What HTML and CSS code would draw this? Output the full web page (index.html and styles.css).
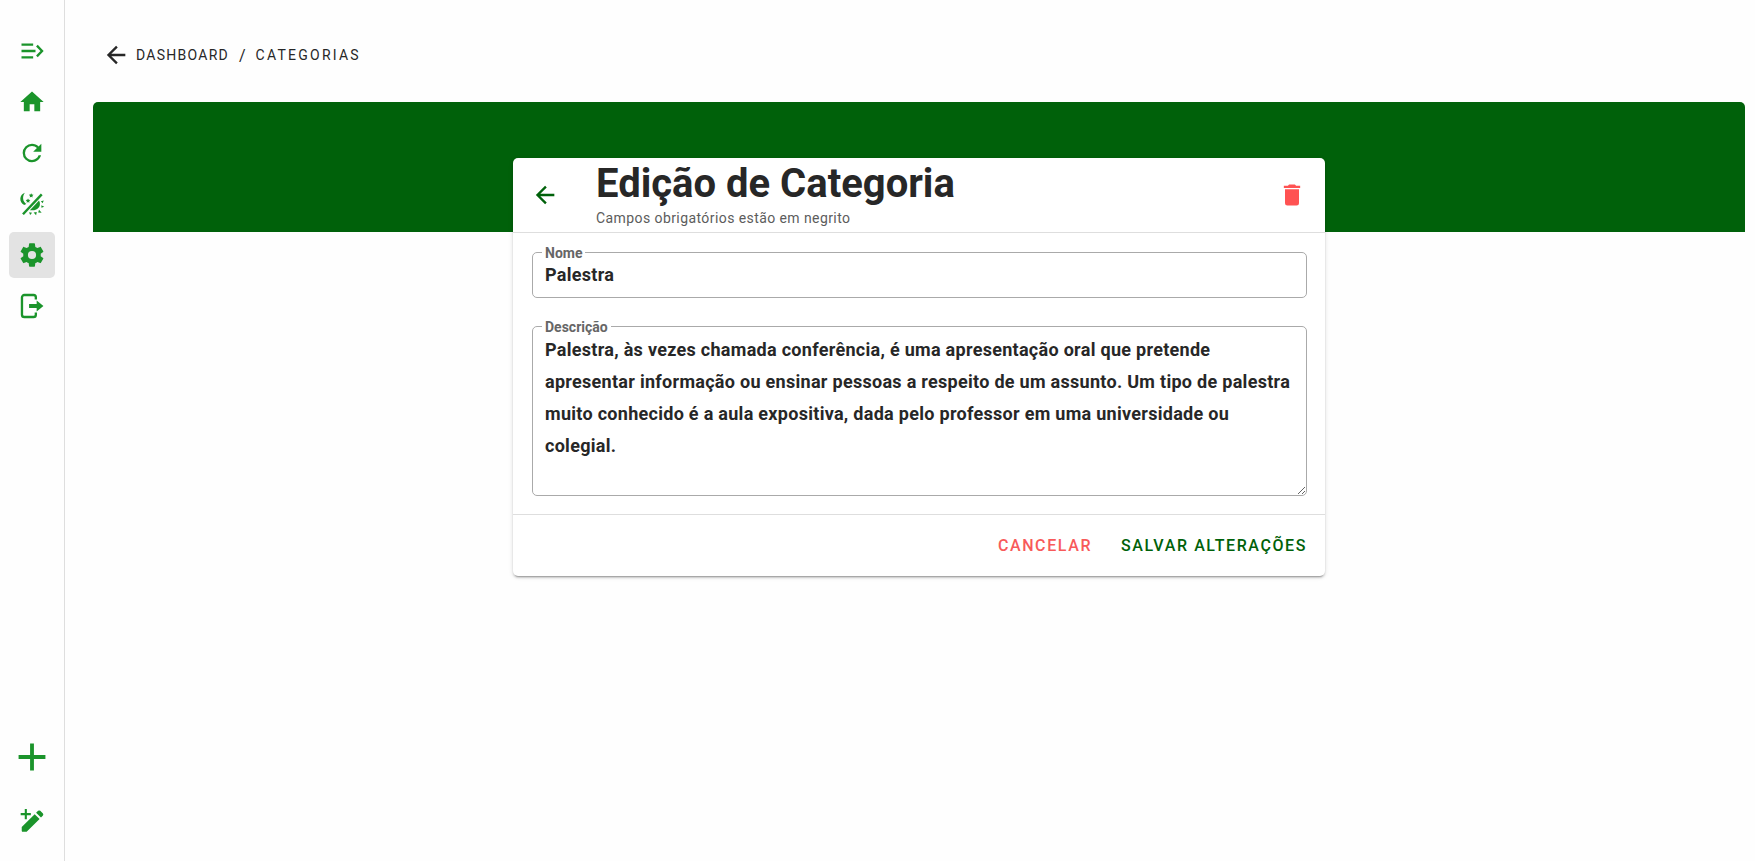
FILE: index.html
```html
<!DOCTYPE html>
<html lang="pt-BR">
<head>
<meta charset="utf-8">
<meta name="viewport" content="width=device-width, initial-scale=1">
<title>Edição de Categoria</title>
<link rel="stylesheet" href="styles.css">
</head>
<body>
<div class="app">
  <nav class="sidebar" aria-label="Menu principal">
    <div class="sidebar-group">
      <button class="nav-button" type="button" aria-label="Expandir menu">
        <svg class="icon icon-line" viewBox="0 0 24 24"><path d="M3 6.500h10M3 12h12M3 17.500h10M16.200 7.400l4.400 4.600-4.400 4.600"/></svg>
      </button>
      <a class="nav-button" href="#inicio" aria-label="Início">
        <svg class="icon" viewBox="0 0 24 24"><path d="M10,20V14H14V20H19V12H22L12,3L2,12H5V20H10Z"/></svg>
      </a>
      <button class="nav-button" type="button" aria-label="Atualizar">
        <svg class="icon" viewBox="0 0 24 24"><path d="M17.65,6.35C16.2,4.9 14.21,4 12,4A8,8 0 0,0 4,12A8,8 0 0,0 12,20C15.73,20 18.84,17.45 19.73,14H17.65C16.83,16.33 14.61,18 12,18A6,6 0 0,1 6,12A6,6 0 0,1 12,6C13.66,6 15.14,6.69 16.22,7.78L13,11H20V4L17.65,6.35Z"/></svg>
      </button>
      <button class="nav-button" type="button" aria-label="Alternar tema">
        <svg class="icon" viewBox="0 0 24 24"><path d="M3.500 20.100L19.600 3L21.100 4.400L5 21.500Z"/><path d="M6 2.400C.8 4 .8 10.700 5.300 12.800L7.100 11.900C3.800 10 3.600 5 6 2.400Z"/><path d="M11.300 2.700l.6 1.200 1.400.2-1 1 .2 1.400-1.200-.7-1.200.7.2-1.400-1-1 1.400-.2zM8.600 7.200l.6 1.200 1.400.2-1 1 .2 1.400-1.200-.7-1.200.7.2-1.400-1-1 1.400-.2z"/><path d="M18 8.900C20.500 13.400 17.200 18.200 10.200 17.300Z"/><path d="M19.600 9.600l2.500-.6-1 2.300zM20 13l2.500 1.300-2.400 1zM18 17l2.300 2.500-3-.3zM13.400 19.300l2.700-.4-.6 2.800zM9.500 19l2.600.4-1.700 2z"/></svg>
      </button>
      <a class="nav-button is-active" href="#configuracoes" aria-label="Configurações" aria-current="page">
        <svg class="icon" viewBox="0 0 24 24"><path d="M12,15.5A3.5,3.5 0 0,1 8.5,12A3.5,3.5 0 0,1 12,8.5A3.5,3.5 0 0,1 15.5,12A3.5,3.5 0 0,1 12,15.5M19.43,12.97C19.47,12.65 19.5,12.33 19.5,12C19.5,11.67 19.47,11.34 19.43,11L21.54,9.37C21.73,9.22 21.78,8.95 21.66,8.73L19.66,5.27C19.54,5.05 19.27,4.96 19.05,5.05L16.56,6.05C16.04,5.66 15.5,5.32 14.87,5.07L14.5,2.42C14.46,2.18 14.25,2 14,2H10C9.75,2 9.54,2.18 9.5,2.42L9.13,5.07C8.5,5.32 7.96,5.66 7.44,6.05L4.95,5.05C4.73,4.96 4.46,5.05 4.34,5.27L2.34,8.73C2.21,8.95 2.27,9.22 2.46,9.37L4.57,11C4.53,11.34 4.5,11.67 4.5,12C4.5,12.33 4.53,12.65 4.57,12.97L2.46,14.63C2.27,14.78 2.21,15.05 2.34,15.27L4.34,18.73C4.46,18.95 4.73,19.03 4.95,18.95L7.44,17.94C7.96,18.34 8.5,18.68 9.13,18.93L9.5,21.58C9.54,21.82 9.75,22 10,22H14C14.25,22 14.46,21.82 14.5,21.58L14.87,18.93C15.5,18.67 16.04,18.34 16.56,17.94L19.05,18.95C19.27,19.03 19.54,18.95 19.66,18.73L21.66,15.27C21.78,15.05 21.73,14.78 21.54,14.63L19.43,12.97Z"/></svg>
      </a>
      <a class="nav-button" href="#sair" aria-label="Sair">
        <svg class="icon" viewBox="0 0 24 24"><path class="stroke" d="M15.300 6.500V4.600a2 2 0 0 0-2-2H5.400a2 2 0 0 0-2 2V19.400a2 2 0 0 0 2 2h7.900a2 2 0 0 0 2-2V17.500"/><path d="M9.500 10.300H16V7.200L21.800 12L16 16.800V13.700H9.500Z"/></svg>
      </a>
    </div>
    <div class="sidebar-group sidebar-actions">
      <button class="nav-button" type="button" aria-label="Adicionar">
        <svg class="icon icon-large" viewBox="0 0 24 24"><path d="M19,13H13V19H11V13H5V11H11V5H13V11H19V13Z"/></svg>
      </button>
      <button class="nav-button" type="button" aria-label="Criar com assistente">
        <svg class="icon" viewBox="0 0 24 24"><path d="M5.800 1.800H7.600V5.200H11V7H7.600V10.500H5.800V7H2.300V5.200H5.800Z"/><path d="M3.200 17.100L14.300 6.200L18.500 10.200L7.400 21.300H4.200Q3.200 21.300 3.200 20.300ZM15.500 5L17.200 3.300Q18.200 2.600 19.100 3.300L21.400 5.600Q22 6.500 21.400 7.300L19.700 9Z"/></svg>
      </button>
    </div>
  </nav>

  <main class="content">
    <nav class="breadcrumb" aria-label="Trilha">
      <a class="crumb" href="#dashboard">
        <svg class="icon" viewBox="0 0 24 24"><path d="M20,11V13H8L13.5,18.5L12.08,19.92L4.16,12L12.08,4.08L13.5,5.5L8,11H20Z"/></svg>
        <span>DASHBOARD</span>
      </a>
      <span class="divider">/</span>
      <span class="current">CATEGORIAS</span>
    </nav>

    <div class="banner"></div>

    <form class="card">
      <header class="card-header">
        <button class="icon-button back" type="button" aria-label="Voltar">
          <svg class="icon" viewBox="0 0 24 24"><path d="M20,11V13H8L13.5,18.5L12.08,19.92L4.16,12L12.08,4.08L13.5,5.5L8,11H20Z"/></svg>
        </button>
        <div class="heading">
          <h1 class="title">Edição de Categoria</h1>
          <p class="subtitle">Campos obrigatórios estão em negrito</p>
        </div>
        <button class="icon-button delete" type="button" aria-label="Excluir">
          <svg class="icon" viewBox="0 0 24 24"><path d="M19,4H15.5L14.5,3H9.5L8.500,4H5V6H19M6,19A2,2 0 0,0 8,21H16A2,2 0 0,0 18,19V7H6V19Z"/></svg>
        </button>
      </header>
      <div class="card-body">
        <fieldset class="field">
          <legend class="field-legend"><label for="nome">Nome</label></legend>
          <input class="field-control" id="nome" type="text" value="Palestra">
        </fieldset>
        <fieldset class="field">
          <legend class="field-legend"><label for="descricao">Descrição</label></legend>
          <textarea class="field-control" id="descricao" rows="4" spellcheck="false">Palestra, às vezes chamada conferência, é uma apresentação oral que pretende apresentar informação ou ensinar pessoas a respeito de um assunto. Um tipo de palestra muito conhecido é a aula expositiva, dada pelo professor em uma universidade ou colegial.</textarea>
        </fieldset>
      </div>
      <footer class="card-footer">
        <button class="text-button cancel" type="button">CANCELAR</button>
        <button class="text-button save" type="submit">SALVAR ALTERAÇÕES</button>
      </footer>
    </form>
  </main>
</div>
</body>
</html>
```
FILE: styles.css
```css
* {
  box-sizing: border-box;
}

body {
  margin: 0;
  background: #fefefe;
  color: #272727;
  font-family: Roboto, "Liberation Sans", sans-serif;
}

button,
input,
textarea {
  font-family: inherit;
}

button {
  border: 0;
  padding: 0;
  background: none;
  cursor: pointer;
}

a {
  color: inherit;
  text-decoration: none;
}

.app {
  display: flex;
  min-height: 100vh;
}

.sidebar {
  display: flex;
  flex: none;
  flex-direction: column;
  justify-content: space-between;
  width: 65px;
  padding: 28px 9px 17px;
  border-right: 1px solid #dedede;
}

.sidebar-group {
  display: flex;
  flex-direction: column;
  gap: 5px;
}

.sidebar-actions {
  gap: 18px;
}

.nav-button {
  display: flex;
  align-items: center;
  justify-content: center;
  height: 46px;
  border-radius: 5px;
  color: #1b942b;
}

.nav-button.is-active {
  background: #e3e3e3;
}

.icon {
  display: block;
  flex: none;
  width: 28px;
  height: 28px;
  fill: currentColor;
}

.icon-large {
  width: 46px;
  height: 46px;
}

.icon-line,
.icon .stroke {
  fill: none;
  stroke: currentColor;
  stroke-width: 2;
}

.content {
  flex: 1;
  min-width: 0;
  padding: 28px 10px 28px 28px;
}

.breadcrumb {
  display: flex;
  align-items: center;
  gap: 10px;
  height: 54px;
  margin-bottom: 20px;
  padding-left: 9px;
  font-size: 14px;
}

.crumb {
  display: flex;
  align-items: center;
  gap: 6px;
  letter-spacing: 0.09em;
}

.divider {
  font-size: 16px;
}

.current {
  letter-spacing: 0.16em;
}

.banner {
  height: 130px;
  border-radius: 5px 5px 0 0;
  background: #00610a;
}

.card {
  position: relative;
  max-width: 812px;
  margin: -74px auto 0;
  border-radius: 5px;
  background: #fff;
  box-shadow: 0 3px 1px -2px rgba(0, 0, 0, 0.2), 0 2px 2px rgba(0, 0, 0, 0.14), 0 1px 5px rgba(0, 0, 0, 0.12);
}

.card-header {
  display: flex;
  align-items: center;
  height: 75px;
  padding: 0 19px 0 18px;
  border-bottom: 1px solid #dedede;
}

.icon-button.back {
  margin-right: 37px;
  color: #00610a;
}

.icon-button.delete {
  color: #ff5252;
}

.heading {
  flex: 1;
  padding-bottom: 2px;
}

.title {
  margin: 0;
  font-size: 40px;
  font-weight: 700;
  line-height: 48px;
}

.subtitle {
  margin: 0;
  color: #5c5c5c;
  font-size: 14px;
  letter-spacing: 0.03em;
  line-height: 20px;
}

.card-body {
  display: flex;
  flex-direction: column;
  gap: 20px;
  padding: 11px 18px 18px 19px;
}

.field {
  min-width: 0;
  margin: 0;
  padding: 0;
  border: 1px solid #aaa;
  border-radius: 5px;
}

.field-legend {
  margin-left: 9px;
  padding: 2px 3px 0;
  color: #666;
  font-size: 14px;
  font-weight: 700;
  line-height: 14px;
}

.field-control {
  display: block;
  width: 100%;
  border: 0;
  padding: 0 12px;
  outline: 0;
  background: none;
  color: #272727;
  font-size: 18px;
  font-weight: 700;
  letter-spacing: 0.016em;
  line-height: 32px;
}

input.field-control {
  height: 37px;
  padding-bottom: 8px;
}

textarea.field-control {
  height: 161px;
  resize: vertical;
}

.card-footer {
  display: flex;
  align-items: center;
  justify-content: flex-end;
  gap: 29px;
  height: 62px;
  padding: 0 18px;
  border-top: 1px solid #dedede;
}

.text-button {
  font-size: 16px;
  font-weight: 500;
  letter-spacing: 0.1em;
  line-height: 36px;
}

.text-button.cancel {
  color: #f85a5a;
}

.text-button.save {
  color: #00610a;
}
```
